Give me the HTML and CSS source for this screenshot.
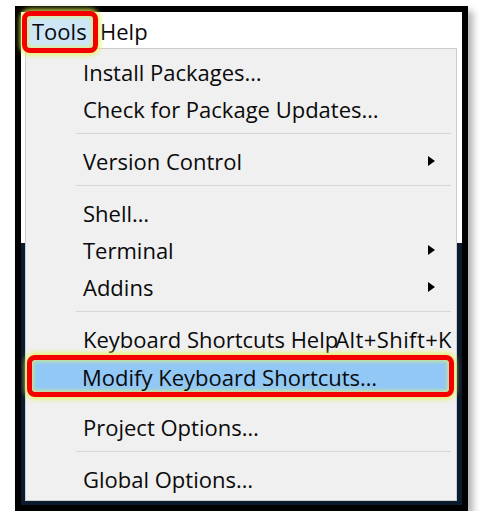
FILE: index.html
```html
<!DOCTYPE html>
<html>
<head>
<meta charset="utf-8">
<link rel="stylesheet" href="styles.css">
</head>
<body>
<div class="frame">
  <div class="menubar">
    <div class="top-item top-item--active">Tools</div>
    <div class="top-item">Help</div>
  </div>
  <div class="menu">
    <div class="row">Install Packages…</div>
    <div class="row">Check for Package Updates…</div>
    <div class="sep"></div>
    <div class="row"><span class="label">Version Control</span><span class="arrow"></span></div>
    <div class="sep"></div>
    <div class="row">Shell…</div>
    <div class="row"><span class="label">Terminal</span><span class="arrow"></span></div>
    <div class="row"><span class="label">Addins</span><span class="arrow"></span></div>
    <div class="sep"></div>
    <div class="row"><span class="label label--squeeze">Keyboard Shortcuts Help</span><span class="shortcut">Alt+Shift+K</span></div>
    <div class="row row--hl">Modify Keyboard Shortcuts…</div>
    <div class="row">Project Options…</div>
    <div class="sep"></div>
    <div class="row">Global Options…</div>
  </div>
</div>
</body>
</html>
```
FILE: styles.css
```css
html, body {
  margin: 0;
  background: #ffffff;
}
body {
  padding: 6px 0 0 15px;
  font-family: "Open Sans", "Noto Sans", sans-serif;
  color: #0a0a0a;
}
.frame {
  box-sizing: border-box;
  width: 453px;
  height: 505px;
  border: 6px solid #000;
  box-shadow: 5px 5px 7px rgba(0, 0, 0, 0.3);
  background: linear-gradient(to bottom, #ffffff 0 231px, #0b1a2e 231px);
}
.menubar {
  display: flex;
  align-items: flex-start;
  height: 36px;
  background: #fff;
}
.top-item {
  margin-top: -1px;
  height: 42px;
  line-height: 41px;
  font-size: 22px;
  padding-left: 2px;
}
.top-item--active {
  position: relative;
  z-index: 2;
  box-sizing: border-box;
  width: 76px;
  margin-left: 1px;
  padding-left: 5px;
  line-height: 31px;
  border: 5px solid #f50000;
  border-radius: 8px;
  background: #cde6f8;
  box-shadow: 0 0 5px 2px rgba(228, 238, 80, 0.9), inset 0 0 4px 1px rgba(222, 238, 110, 0.95);
}
.menu {
  box-sizing: border-box;
  margin-left: 4px;
  width: 432px;
  height: 453px;
  border: 1px solid #cdcdcd;
  background: #f0f0f0;
  padding-top: 4px;
}
.row {
  display: flex;
  align-items: center;
  height: 37px;
  padding-left: 57px;
  font-size: 22px;
  white-space: nowrap;
}
.label {
  flex: 1 1 auto;
}
.label--squeeze {
  flex: 1 1 0;
  min-width: 0;
}
.arrow {
  width: 0;
  height: 0;
  margin-right: 21px;
  border-left: 7px solid #000;
  border-top: 5px solid transparent;
  border-bottom: 5px solid transparent;
}
.shortcut {
  margin-right: 4px;
  letter-spacing: 0.4px;
}
.sep {
  height: 15px;
  margin-left: 50px;
  margin-right: 5px;
  background: linear-gradient(to bottom, transparent 0 6px, #d6d6d6 6px 7px, transparent 7px);
}
.row--hl {
  position: relative;
  z-index: 1;
  box-sizing: border-box;
  height: 42px;
  margin: -2px 2px 11px 1px;
  padding-left: 50px;
  padding-top: 1px;
  border: 5px solid #f50000;
  border-radius: 8px;
  background: #91c8f5;
  box-shadow: 0 0 5px 2px rgba(228, 238, 80, 0.9), inset 0 0 4px 1px rgba(222, 238, 110, 0.95);
}
```
